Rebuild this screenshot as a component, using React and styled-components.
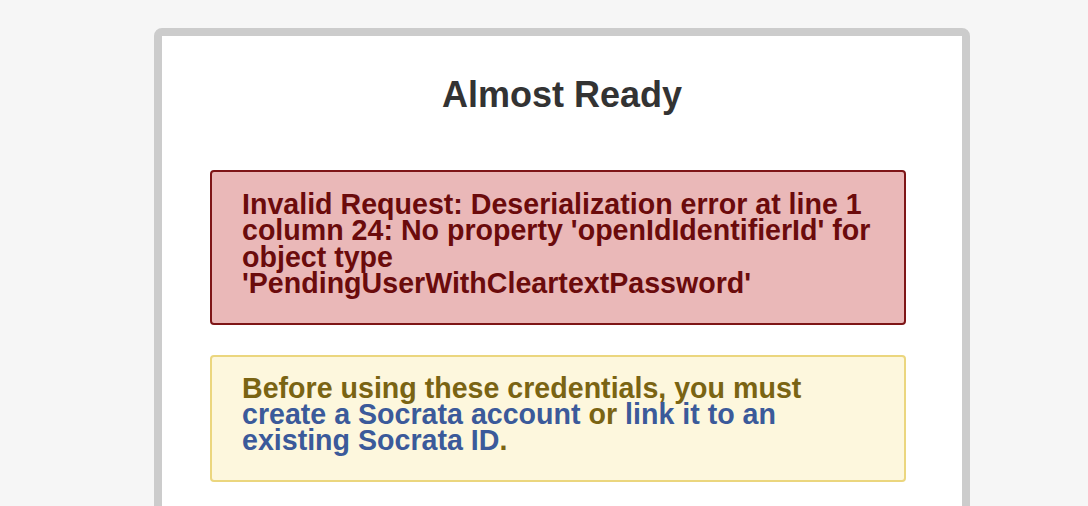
import React from "react";
import styled, { createGlobalStyle } from "styled-components";

const Global = createGlobalStyle`
  html, body {
    margin: 0;
    padding: 0;
    background: #f6f6f6;
  }
  body {
    font-family: "Liberation Sans", Arial, Helvetica, sans-serif;
  }
  * { box-sizing: border-box; }
`;

const Page = styled.div`
  padding: 28px 0 0 154px;
  height: 506px;
  overflow: hidden;
`;

const Card = styled.section`
  width: 816px;
  min-height: 520px;
  background: #ffffff;
  border: 8px solid #cccccc;
  border-radius: 8px;
  padding: 38px 56px 40px 48px;
`;

const Title = styled.h1`
  margin: 0 0 55px 0;
  font-size: 36px;
  line-height: 41px;
  font-weight: bold;
  color: #333333;
  text-align: center;
  padding-left: 8px;
`;

const Notice = styled.div`
  border: 2px solid ${(p) => (p.$kind === "error" ? "#7e1517" : "#ebd67e")};
  background: ${(p) => (p.$kind === "error" ? "#eab8b8" : "#fdf7dd")};
  color: ${(p) => (p.$kind === "error" ? "#6b0b0c" : "#7a6413")};
  border-radius: 4px;
  padding: ${(p) => (p.$kind === "error" ? "19px 30px 26px 30px" : "18px 30px 26px 30px")};
  font-size: 28.6px;
  line-height: 26.4px;
  font-weight: bold;
  margin-bottom: 30px;
`;

const Link = styled.a`
  color: #3b5a9a;
  text-decoration: none;
`;

export default function App() {
  return (
    <>
      <Global />
      <Page>
        <Card>
          <Title>Almost Ready</Title>
          <Notice $kind="error">
            Invalid Request: Deserialization error at line 1 column 24: No property
            'openIdIdentifierId' for object type 'PendingUserWithCleartextPassword'
          </Notice>
          <Notice $kind="warning">
            Before using these credentials, you must{" "}
            <Link href="#">create a Socrata account</Link> or{" "}
            <Link href="#">link it to an existing Socrata ID</Link>.
          </Notice>
        </Card>
      </Page>
    </>
  );
}
